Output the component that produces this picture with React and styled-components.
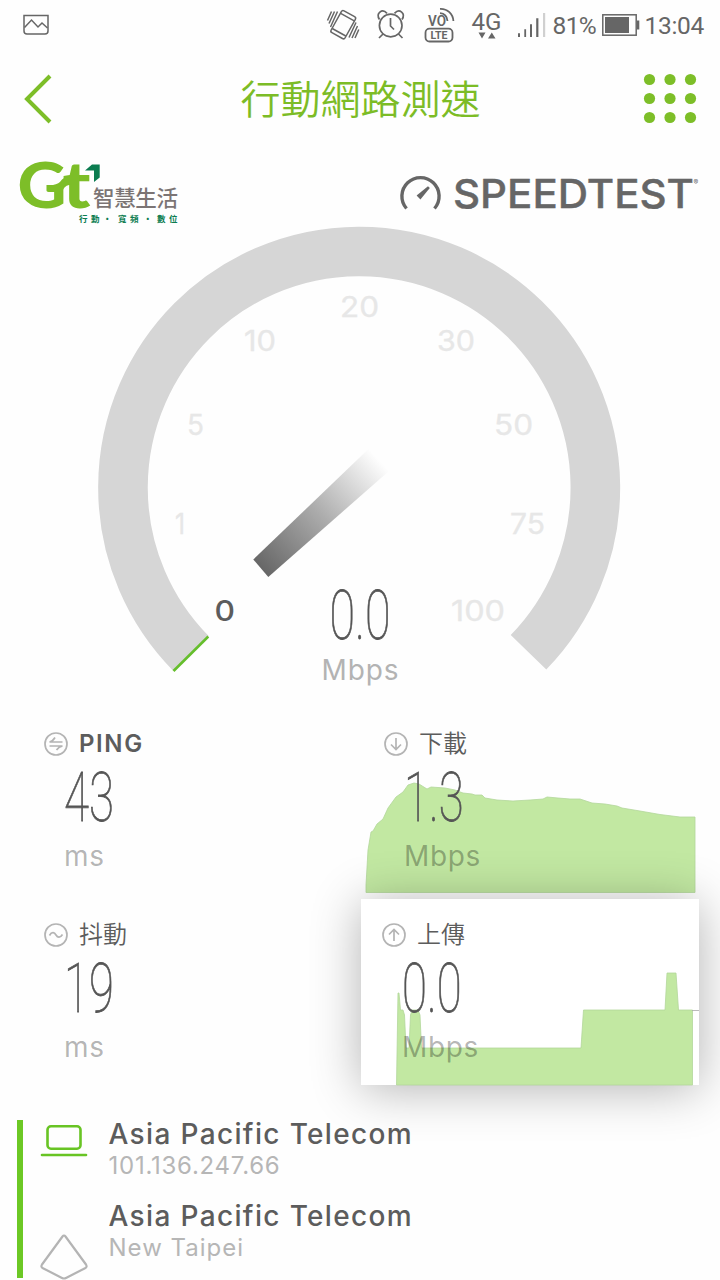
import React from "react";
import styled, { createGlobalStyle } from "styled-components";

const GlobalStyle = createGlobalStyle`
  body {
    margin: 0;
    background: #fefefe;
    overflow: hidden;
  }

  * {
    box-sizing: border-box;
  }

  svg {
    display: block;
    flex: none;
    overflow: visible;
  }
`;

const Screen = styled.div`
  width: 720px;
  height: 1280px;
  overflow: hidden;
  background: #fefefe;
  font-family: Inter, "Noto Sans CJK TC", sans-serif;
  color: #5c5c5c;
`;

const StatusBar = styled.div`
  display: flex;
  align-items: center;
  height: 50px;
  padding-left: 22px;
  font-family: Roboto, sans-serif;
  color: #666;
`;

const StatusItem = styled.div`
  width: ${(p) => p.$width}px;
  margin-left: ${(p) => p.$gap || 0}px;
  font-size: 24.5px;
  line-height: 51px;
  white-space: nowrap;
  letter-spacing: ${(p) => p.$spacing || 0}px;
`;

const Header = styled.header`
  display: flex;
  align-items: center;
  justify-content: space-between;
  height: 98px;
  padding: 0 23px 0 23px;
`;

const Title = styled.h1`
  margin: 0;
  padding: 0 0 4px 25px;
  font-family: "Noto Sans CJK TC", sans-serif;
  font-weight: 350;
  font-size: 40px;
  line-height: 94px;
  color: #7cbc26;
`;

const Brands = styled.div`
  display: flex;
  justify-content: space-between;
  height: 77px;
  padding: 12px 20px 0 20px;
`;

const SpeedtestMark = styled.div`
  padding-top: 12px;
`;

const GaugeArea = styled.div`
  height: 484px;
`;

const Metrics = styled.section`
  display: grid;
  grid-template-columns: 361px 338px;
  grid-template-rows: 190px 186px;
`;

const Cell = styled.div`
  position: relative;
  padding: ${(p) => p.$top || 20}px 0 0 ${(p) => p.$indent}px;
  background: ${(p) => (p.$active ? "#fff" : "none")};
  box-shadow: ${(p) => (p.$active ? "0 4px 46px rgba(0, 0, 0, 0.3)" : "none")};
`;

const Chart = styled.svg`
  position: absolute;
  left: 0;
  top: 0;
`;

const CellContent = styled.div`
  position: relative;
`;

const CellHead = styled.div`
  display: flex;
  align-items: center;
  gap: 11px;
  height: 30px;
  font-size: 24px;
  font-weight: ${(p) => (p.$bold ? 600 : 350)};
  line-height: 30px;
  letter-spacing: ${(p) => (p.$bold ? 1.6 : 0)}px;
`;

const Value = styled.div`
  width: max-content;
  margin: 14px 0 0 20px;
  font-family: Roboto, sans-serif;
  font-weight: 100;
  font-size: 69px;
  line-height: 50px;
  color: #555;
  -webkit-text-stroke: 0.8px #555;
  transform: scaleX(0.66);
  transform-origin: left;
`;

const Unit = styled.div`
  margin: 18px 0 0 20px;
  font-size: 28px;
  line-height: 30px;
  letter-spacing: 0.6px;
  color: rgba(0, 0, 0, 0.3);
`;

const Connection = styled.section`
  display: flex;
  height: 160px;
  margin: 35px 0 0 17px;
`;

const Bar = styled.div`
  width: 6px;
  height: 158px;
  background: #6cc825;
`;

const Hosts = styled.div`
  display: flex;
  flex-direction: column;
`;

const Host = styled.div`
  display: flex;
  flex: none;
  height: 82px;
  padding-left: 17px;
`;

const HostText = styled.div`
  padding: 1px 0 0 20.5px;
`;

const HostName = styled.div`
  height: 31px;
  font-size: 28px;
  font-weight: 500;
  line-height: 26px;
  letter-spacing: 1.35px;
  white-space: nowrap;
`;

const HostDetail = styled.div`
  font-size: 24px;
  line-height: 28px;
  letter-spacing: ${(p) => p.$spacing}px;
  color: #b6b6b6;
`;

const marks = [
  { label: "1", x: 175, y: 534, w: 10 },
  { label: "5", x: 187, y: 435, w: 17 },
  { label: "10", x: 244, y: 351, w: 32 },
  { label: "20", x: 340, y: 317, w: 39 },
  { label: "30", x: 437, y: 351, w: 38 },
  { label: "50", x: 494, y: 435, w: 39 },
  { label: "75", x: 510, y: 534, w: 35 },
  { label: "100", x: 451, y: 621, w: 54 },
];

const downloadPoints =
  "366,892.5 366,885 368,850 371,832 373,831 377,824 383,819 388,808 396,797 403,792 408,785 414,783 419,784 427,789 431,787 445,788 455,790 463,793 472,794 475,795 482,795 485,798 497,800 513,801 530,800 543,799 547,797 558,798 570,799 580,799 592,803 605,804 617,806 622,808 640,811 660,814.5 680,817 695,817 695,892.5";

const uploadPoints =
  "396.5,1085 398,993 399,993 400.5,1010 403,1010 404.5,1015 406,1048 409,1048 410.5,1015 412,1010 418,1010 420,1015 421.5,1048 581,1048 583.5,1010 665,1010 667,973 676,973 678.5,1010 692.5,1010 692.5,1085";

const Status = () => (
  <StatusBar>
    <svg width="28" height="24" fill="none" stroke="#666" strokeWidth="1.5">
      <path d="M2 2.5H26V18Q26 21 23 21H5Q2 21 2 18Z" />
      <path d="M2.5 14.5L9.5 7L16 14L20 10L25.5 15" />
    </svg>
    <StatusItem $width={32} $gap={277}>
      <svg width="32" height="32" viewBox="327 8 32 32" fill="none" stroke="#666" strokeWidth="1.5">
        <g transform="rotate(29 343.3 23.6)">
          <rect x="335.3" y="11.2" width="16" height="25" rx="2" />
          <path d="M335.5 15H351M335.5 32.4H351" />
        </g>
        <path d="M331.5 10.5L327.5 19.5M334.5 10.5L329 22.5M337.5 10.5L330.5 26M349 36.5L356 21.5M352 37L357.5 25M355 37L358.8 28.5" />
      </svg>
    </StatusItem>
    <StatusItem $width={28} $gap={18}>
      <svg width="28" height="30" viewBox="377 9 28 30" fill="none" stroke="#666" strokeWidth="1.7">
        <circle cx="390.7" cy="24.5" r="11.3" />
        <path d="M390.5 17V25L394 28.5M383 33L379 37M398.5 33L402.5 37" />
        <path d="M379.5 18.5C375.5 12.5 382 7 387 12.3M402 18.5C406 12.5 399.5 7 394.5 12.3" />
      </svg>
    </StatusItem>
    <StatusItem $width={30} $gap={19}>
      <svg width="30" height="36" viewBox="424 6 30 36" fill="none" stroke="#666" strokeWidth="1.8">
        <text x="428" y="25" fontSize="15" fontWeight="600" fill="#666" stroke="none" textLength="18" lengthAdjust="spacingAndGlyphs">VO</text>
        <path d="M440 12.2C444 12.5 447 15 447.5 20M440 7.8C447.5 7.5 453 13 453.4 20" />
        <rect x="425.5" y="27.7" width="27" height="12.8" rx="4" />
        <text x="430.5" y="38" fontSize="11" fontWeight="700" fill="#666" stroke="none" textLength="17" lengthAdjust="spacingAndGlyphs">LTE</text>
      </svg>
    </StatusItem>
    <StatusItem $width={30} $gap={18}>
      <svg width="30" height="30" viewBox="472 11 30 30" fill="#666">
        <text x="471.5" y="30.5" fontSize="23" textLength="30" lengthAdjust="spacingAndGlyphs">4G</text>
        <path d="M478.5 33.5H485.5L482 39.5ZM488 39.5H495.5L491.8 33.5Z" />
      </svg>
    </StatusItem>
    <StatusItem $width={28} $gap={16}>
      <svg width="28" height="26" viewBox="518 11 28 26" fill="#666">
        <path d="M518 32.3h2v3.7h-2zM524.3 28.3h1.8V36h-1.8zM530 23.3h2V36h-2zM536.2 17.3h2.2V36h-2.2z" />
        <path fill="#d0d0d0" d="M543 12h2.2v24H543z" />
      </svg>
    </StatusItem>
    <StatusItem $width={43} $gap={6.5} $spacing={-0.6}>81%</StatusItem>
    <StatusItem $width={38} $gap={6}>
      <svg width="38" height="24" viewBox="602 12 38 24" fill="#666">
        <rect x="602.8" y="13.8" width="33.4" height="20.4" fill="none" stroke="#666" strokeWidth="1.5" />
        <path d="M605 16h24v16h-24zM637 19.5h2.3v9H637z" />
      </svg>
    </StatusItem>
    <StatusItem $width={60} $gap={5} $spacing={-0.3}>13:04</StatusItem>
  </StatusBar>
);

const Logo = () => (
  <svg width="160" height="64" viewBox="20 160 160 64" fontFamily='"Noto Sans CJK TC", sans-serif'>
    <g fill="#7dbe28" fontFamily="Lato, sans-serif" fontWeight="900">
      <text x="17.5" y="207.5" fontSize="63" textLength="49" lengthAdjust="spacingAndGlyphs">G</text>
      <text x="62.5" y="207.5" fontSize="65" textLength="28" lengthAdjust="spacingAndGlyphs">t</text>
      <path d="M53 185Q59 184 62 179.5Q64 177 68 177H74V185H69Q64 186 62 192H53Z" />
    </g>
    <path fill="#0b7c50" d="M85 170.5L92 164.5H99.7V177.5L94 182V170.5Z" />
    <text x="93" y="205.5" fontSize="21.5" fontWeight="500" fill="#7b7474" textLength="85">智慧生活</text>
    <text x="79 91 103 118 130 143.5 157 169" y="221.5" fontSize="8.5" fontWeight="700" fill="#0b7c50">行動・寬頻・數位</text>
  </svg>
);

const SpeedtestLogo = () => (
  <SpeedtestMark>
    <svg width="300" height="40" viewBox="400 172 300 40" fill="#666">
      <path d="M406.5 208.5A18.6 18.6 0 1 1 434.5 208.5" fill="none" stroke="#666" strokeWidth="3.4" />
      <path d="M416.6 195.6L428 186.2L429.8 188L420.4 199.4Z" />
      <text x="453" y="208.3" fontSize="40" fontWeight="500" stroke="#666" strokeWidth="0.4" textLength="241" lengthAdjust="spacingAndGlyphs">SPEEDTEST</text>
      <text x="693.5" y="185" fontSize="7">®</text>
    </svg>
  </SpeedtestMark>
);

const Gauge = () => (
  <GaugeArea>
    <svg width="720" height="484" viewBox="0 225 720 484">
      <defs>
        <linearGradient id="needle" gradientUnits="userSpaceOnUse" x1="261" y1="568" x2="379" y2="460">
          <stop offset="0" stopColor="#676767" />
          <stop offset="0.5" stopColor="#acacac" />
          <stop offset="1" stopColor="#fefefe" />
        </linearGradient>
      </defs>
      <path d="M191 653.5A236.2 236.2 0 1 1 528.5 652.3" fill="none" stroke="#d6d6d6" strokeWidth="49.6" />
      <path d="M173.5 671L208.3 636.5" stroke="#65be2c" strokeWidth="2.6" />
      <path d="M253.3 559.5L370 447.5L389 471L268.3 577Z" fill="url(#needle)" />
      <g fontSize="28.5" fill="#e7e7e7" stroke="#e7e7e7" strokeWidth="0.3">
        {marks.map((m) => (
          <text key={m.label} x={m.x} y={m.y} textLength={m.w} lengthAdjust="spacingAndGlyphs">
            {m.label}
          </text>
        ))}
      </g>
      <text x="214.5" y="621" fontSize="28" fontWeight="500" fill="#5c5c5c" textLength="20.5" lengthAdjust="spacingAndGlyphs">0</text>
      <text x="329.5" y="639" fontFamily="Roboto, sans-serif" fontSize="69" fontWeight="100" fill="#555" stroke="#555" strokeWidth="0.8" textLength="61" lengthAdjust="spacingAndGlyphs">0.0</text>
      <text x="321.5" y="679.5" fontSize="28" fill="#b3b3b3" textLength="77">Mbps</text>
    </svg>
  </GaugeArea>
);

const RoundIcon = ({ d }) => (
  <svg width="24" height="24" viewBox="0 0 24 24" fill="none" stroke="#b4b4b4" strokeWidth="1.7">
    <circle cx="12" cy="12" r="11" />
    <path d={d} />
  </svg>
);

const Metric = ({ icon, label, bold, value, unit, indent, top, active, children }) => (
  <Cell $indent={indent} $top={top} $active={active}>
    {children}
    <CellContent>
      <CellHead $bold={bold}>
        <RoundIcon d={icon} />
        {label}
      </CellHead>
      <Value>{value}</Value>
      <Unit>{unit}</Unit>
    </CellContent>
  </Cell>
);

const App = () => (
  <Screen>
    <GlobalStyle />
    <Status />
    <Header>
      <svg width="30" height="50" fill="none" stroke="#7dbe28" strokeWidth="4">
        <path d="M27 2L4 25L27 48" />
      </svg>
      <Title>行動網路測速</Title>
      <svg width="54" height="50" fill="#7dbe28">
        {[5.5, 24.5, 43.5].map((y) => [6.5, 27, 47.5].map((x) => <circle key={x + "-" + y} cx={x} cy={y} r="5.6" />))}
      </svg>
    </Header>
    <Brands>
      <Logo />
      <SpeedtestLogo />
    </Brands>
    <Gauge />
    <Metrics>
      <Metric icon="M18.5 10H5.5Q8.5 9.5 11 5.5M5.5 14H18.5Q15 14.5 12.5 18" label="PING" bold value="43" unit="ms" indent={44} />
      <Metric icon="M12 6V17.5M7 12.5L12 17.5L17 12.5" label="下載" value="1.3" unit="Mbps" indent={23}>
        <Chart width="338" height="190" viewBox="361 709 338 190">
          <polygon points={downloadPoints} fill="#c2e8a2" stroke="#b3d79a" strokeWidth="0.8" />
        </Chart>
      </Metric>
      <Metric icon="M5.5 12.5C8 8 10.5 9.5 12 12S16 15.5 18.5 11.5" label="抖動" value="19" unit="ms" indent={44} top={21} />
      <Metric icon="M12 18V6.5M7 11.5L12 6.5L17 11.5" label="上傳" value="0.0" unit="Mbps" indent={21} top={20.5} active>
        <Chart width="338" height="186" viewBox="361 899 338 186">
          <polygon points={uploadPoints} fill="#c2e8a2" stroke="#b3d79a" strokeWidth="0.8" />
          <path d="M692 1010.5H699" stroke="#aaa" strokeWidth="0.8" />
        </Chart>
      </Metric>
    </Metrics>
    <Connection>
      <Bar />
      <Hosts>
        <Host>
          <svg width="48" height="40" fill="none" stroke="#68c424" strokeWidth="2.6" strokeLinecap="round">
            <rect x="7.5" y="6.3" width="33" height="22.4" rx="3.5" />
            <path d="M2 35H46" />
          </svg>
          <HostText>
            <HostName>Asia Pacific Telecom</HostName>
            <HostDetail $spacing={0.75}>101.136.247.66</HostDetail>
          </HostText>
        </Host>
        <Host>
          <svg width="48" height="78" fill="none" stroke="#b4b4b4" strokeWidth="2.2" strokeLinejoin="round">
            <path d="M22.5 34.5Q24 32.5 25.5 34.5L46 62.5Q47.5 65 45 66.2L26 76Q24 77 22 76L3 66.2Q0.5 65 2 62.5Z" />
          </svg>
          <HostText>
            <HostName>Asia Pacific Telecom</HostName>
            <HostDetail $spacing={1}>New Taipei</HostDetail>
          </HostText>
        </Host>
      </Hosts>
    </Connection>
  </Screen>
);

export default App;
